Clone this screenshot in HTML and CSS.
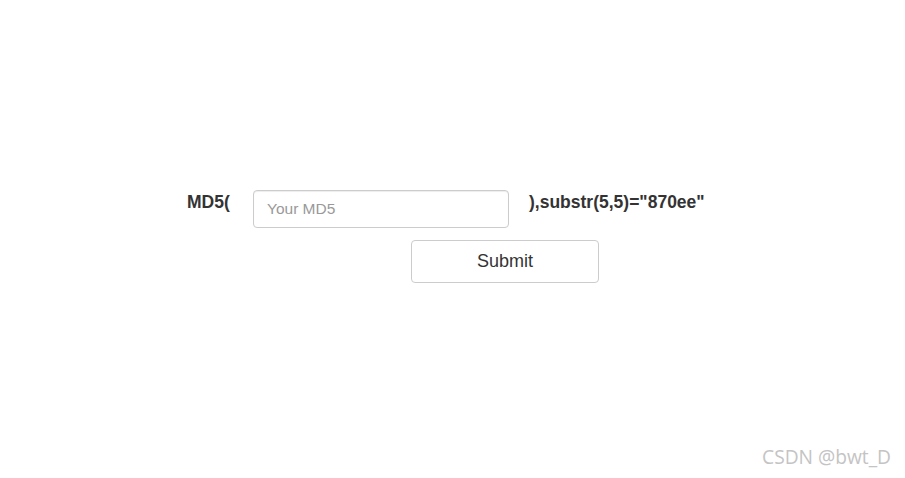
FILE: index.html
```html
<!DOCTYPE html>
<html>
<head>
<meta charset="utf-8">
<link rel="stylesheet" href="styles.css">
</head>
<body>
<main class="page">
  <form class="form">
    <div class="row">
      <label class="label" for="md5">MD5(</label>
      <input class="input" id="md5" type="text" placeholder="Your MD5">
      <span class="suffix">),substr(5,5)="870ee"</span>
    </div>
    <div class="actions">
      <button class="btn" type="button">Submit</button>
    </div>
  </form>
</main>
<div class="watermark">CSDN @bwt_D</div>
</body>
</html>
```
FILE: styles.css
```css
html, body {
  margin: 0;
  padding: 0;
  background: #fff;
}
body {
  width: 905px;
  height: 478px;
  position: relative;
  font-family: "Liberation Sans", Arial, sans-serif;
  color: #333;
  overflow: hidden;
}
.page {
  padding-top: 190px;
  padding-left: 187px;
}
.form {
  display: flex;
  flex-direction: column;
}
.row {
  display: flex;
  align-items: flex-start;
}
.label {
  width: 66px;
  font-weight: bold;
  font-size: 17.5px;
  line-height: 24px;
  padding-top: 0;
}
.input {
  box-sizing: border-box;
  width: 256px;
  height: 38px;
  margin: 0;
  border: 1px solid #ccc;
  border-radius: 4px;
  padding: 0 13px;
  font-family: "Liberation Sans", Arial, sans-serif;
  font-size: 15.5px;
  color: #555;
  box-shadow: inset 0 1px 1px rgba(0,0,0,.075);
  outline: none;
}
.input::placeholder {
  color: #999;
}
.suffix {
  margin-left: 20px;
  font-weight: bold;
  font-size: 17.5px;
  line-height: 24px;
  padding-top: 0;
}
.actions {
  margin-top: 12px;
  padding-left: 224px;
}
.btn {
  box-sizing: border-box;
  width: 188px;
  height: 43px;
  margin: 0;
  background: #fff;
  border: 1px solid #ccc;
  border-radius: 4px;
  font-family: "Liberation Sans", Arial, sans-serif;
  font-size: 18px;
  color: #333;
  padding: 0;
}
.watermark {
  position: absolute;
  right: 14px;
  bottom: 8px;
  font-family: "Open Sans", sans-serif;
  font-size: 19.2px;
  color: #c4c4c4;
}
```
